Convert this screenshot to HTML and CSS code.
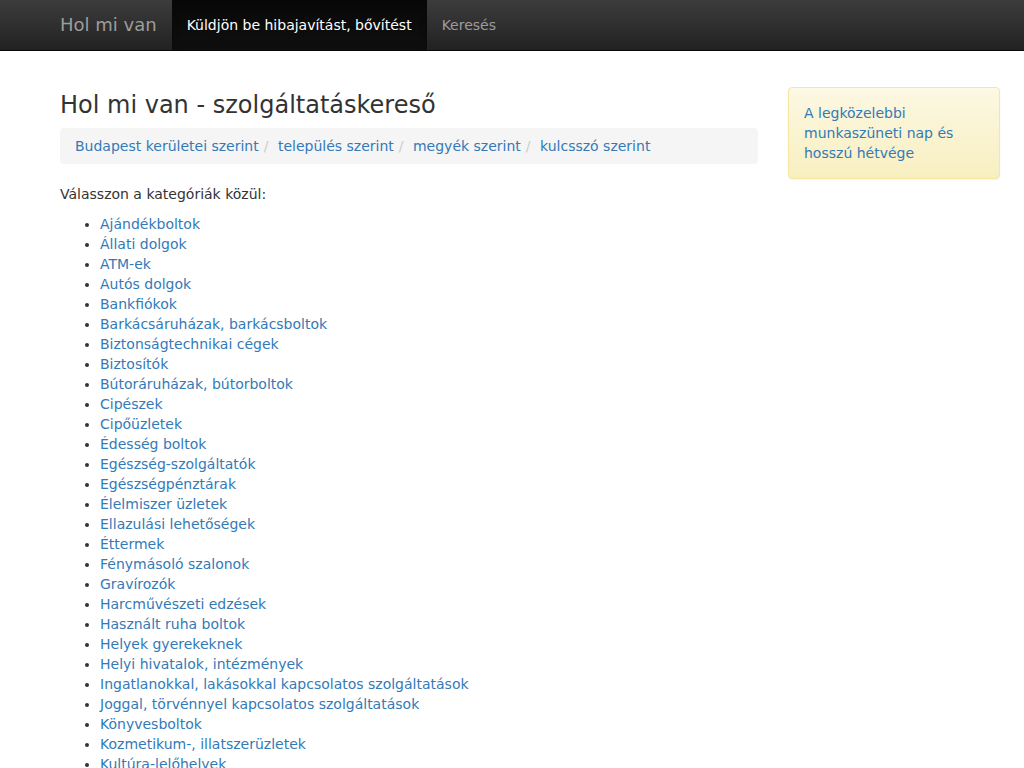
FILE: index.html
```html
<!DOCTYPE html>
<html lang="hu">
<head>
<meta charset="utf-8">
<title>Hol mi van - szolgáltatáskereső</title>
<link rel="stylesheet" href="styles.css">
</head>
<body>
<nav class="navbar">
  <div class="navbar-inner">
    <a class="brand" href="#">Hol mi van</a>
    <ul class="nav">
      <li class="active"><a href="#">Küldjön be hibajavítást, bővítést</a></li>
      <li><a href="#">Keresés</a></li>
    </ul>
  </div>
</nav>
<div class="container">
  <main class="main">
    <h3 class="title">Hol mi van - szolgáltatáskereső</h3>
    <ol class="breadcrumb">
      <li><a href="#">Budapest kerületei szerint</a></li>
      <li><a href="#">település szerint</a></li>
      <li><a href="#">megyék szerint</a></li>
      <li><a href="#">kulcsszó szerint</a></li>
    </ol>
    <p class="intro">Válasszon a kategóriák közül:</p>
    <ul class="cats">
      <li><a href="#">Ajándékboltok</a></li>
      <li><a href="#">Állati dolgok</a></li>
      <li><a href="#">ATM-ek</a></li>
      <li><a href="#">Autós dolgok</a></li>
      <li><a href="#">Bankfiókok</a></li>
      <li><a href="#">Barkácsáruházak, barkácsboltok</a></li>
      <li><a href="#">Biztonságtechnikai cégek</a></li>
      <li><a href="#">Biztosítók</a></li>
      <li><a href="#">Bútoráruházak, bútorboltok</a></li>
      <li><a href="#">Cipészek</a></li>
      <li><a href="#">Cipőüzletek</a></li>
      <li><a href="#">Édesség boltok</a></li>
      <li><a href="#">Egészség-szolgáltatók</a></li>
      <li><a href="#">Egészségpénztárak</a></li>
      <li><a href="#">Élelmiszer üzletek</a></li>
      <li><a href="#">Ellazulási lehetőségek</a></li>
      <li><a href="#">Éttermek</a></li>
      <li><a href="#">Fénymásoló szalonok</a></li>
      <li><a href="#">Gravírozók</a></li>
      <li><a href="#">Harcművészeti edzések</a></li>
      <li><a href="#">Használt ruha boltok</a></li>
      <li><a href="#">Helyek gyerekeknek</a></li>
      <li><a href="#">Helyi hivatalok, intézmények</a></li>
      <li><a href="#">Ingatlanokkal, lakásokkal kapcsolatos szolgáltatások</a></li>
      <li><a href="#">Joggal, törvénnyel kapcsolatos szolgáltatások</a></li>
      <li><a href="#">Könyvesboltok</a></li>
      <li><a href="#">Kozmetikum-, illatszerüzletek</a></li>
      <li><a href="#">Kultúra-lelőhelyek</a></li>
      <li><a href="#">Kulcsmásolók</a></li>
      <li><a href="#">Mobiltelefon üzletek</a></li>
    </ul>
  </main>
  <aside class="side">
    <div class="alert">
      <a href="#">A legközelebbi munkaszüneti nap és hosszú hétvége</a>
    </div>
  </aside>
</div>
</body>
</html>
```

FILE: styles.css
```css
* { box-sizing: border-box; }
html, body { margin: 0; padding: 0; }
body {
  font-family: "DejaVu Sans", sans-serif;
  font-size: 14px;
  line-height: 20px;
  color: #333;
  background: #fff;
}
a { color: #337ab7; text-decoration: none; }

.navbar {
  height: 51px;
  background: linear-gradient(to bottom, #3c3c3c 0%, #222 100%);
  border-bottom: 1px solid #080808;
}
.navbar-inner {
  display: flex;
  align-items: stretch;
  height: 50px;
  padding-left: 45px;
}
.brand {
  display: block;
  padding: 15px 15px;
  font-size: 18px;
  line-height: 20px;
  color: #9d9d9d;
  height: 50px;
}
.nav {
  display: flex;
  list-style: none;
  margin: 0;
  padding: 0;
}
.nav li a {
  display: block;
  padding: 15px 15px;
  line-height: 20px;
  height: 50px;
  color: #9d9d9d;
}
.nav li.active a {
  color: #fff;
  background: linear-gradient(to bottom, #080808 0%, #0f0f0f 100%);
  box-shadow: inset 0 3px 9px rgba(0,0,0,0.25);
}

.container {
  display: flex;
  align-items: flex-start;
  gap: 30px;
  padding-left: 60px;
}
.main { width: 698px; }
.side { width: 212px; padding-top: 36px; }

.title {
  font-size: 24px;
  font-weight: 500;
  line-height: 26px;
  margin: 41px 0 10px;
  color: #333;
}
.breadcrumb {
  list-style: none;
  margin: 0 0 20px;
  padding: 8px 15px;
  background: #f5f5f5;
  border-radius: 4px;
  display: flex;
}
.breadcrumb li + li::before {
  content: "/\00a0";
  padding: 0 5px;
  color: #ccc;
}
.intro { margin: 0 0 10px; }
.cats { margin: 0; padding-left: 40px; }

.alert {
  padding: 15px;
  border: 1px solid #f5e79e;
  border-radius: 4px;
  background: linear-gradient(to bottom, #fcf8e3 0%, #f8efc0 100%);
  box-shadow: inset 0 1px 0 rgba(255,255,255,0.25), 0 1px 2px rgba(0,0,0,0.05);
}
```
